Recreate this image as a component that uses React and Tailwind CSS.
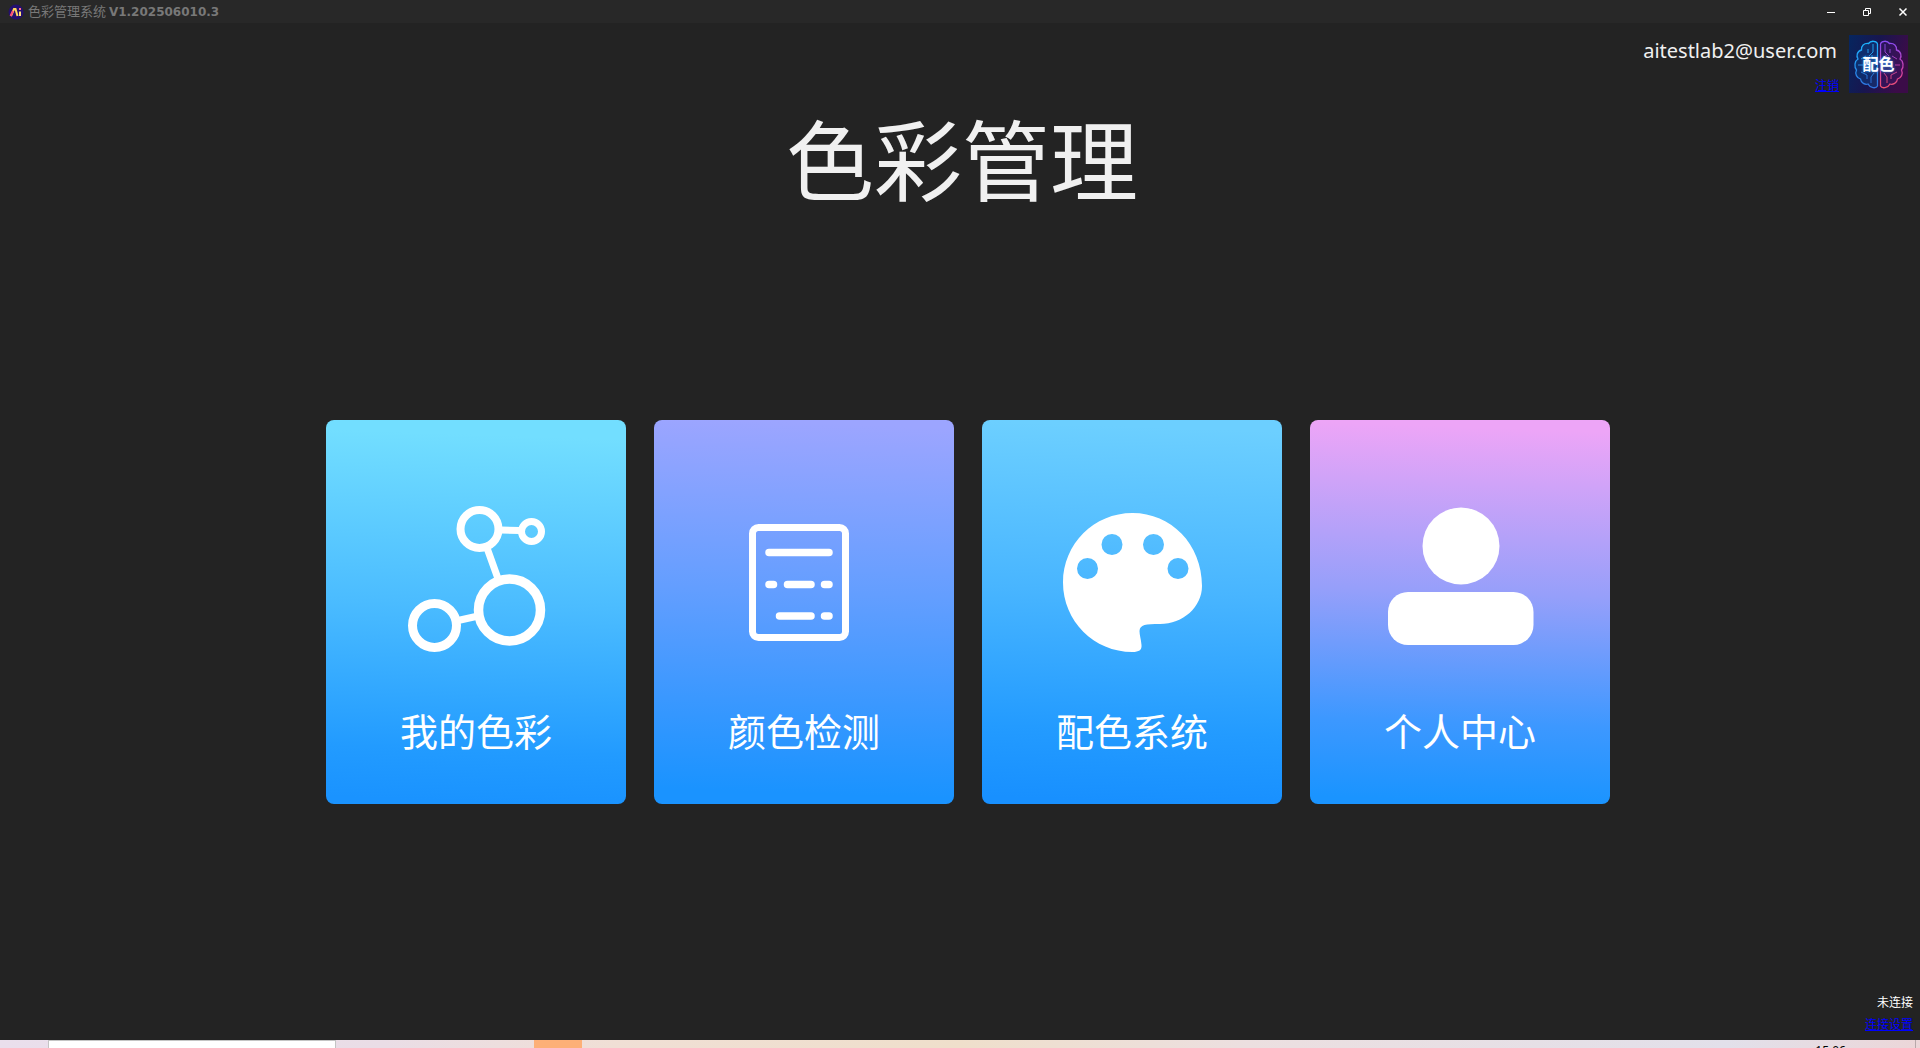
const Molecule = () => (
  <svg viewBox="0 0 300 384" className="h-full w-full" fill="none" stroke="white" aria-hidden="true">
    <circle cx="153.500" cy="109" r="19" strokeWidth="8" />
    <circle cx="205.500" cy="111.500" r="10" strokeWidth="7" />
    <circle cx="183.500" cy="190" r="31" strokeWidth="9.500" />
    <circle cx="108.500" cy="205.500" r="22" strokeWidth="9" />
    <path d="M175 110l19 .5M161 128l11.500 32M132 200.500l18-4" strokeWidth="7" />
  </svg>
);

const Report = () => (
  <svg viewBox="0 0 300 384" className="h-full w-full" fill="none" stroke="white" aria-hidden="true">
    <rect x="98.500" y="107.500" width="93" height="110" rx="6" strokeWidth="7" />
    <path
      d="M115 132.500h60M115 164.500h4.500M133.500 164.500h23.500M170.500 164.500h4.500M125.500 196h31.500M170.500 196h4.500"
      strokeWidth="7.500"
      strokeLinecap="round"
    />
  </svg>
);

const Palette = () => (
  <svg viewBox="0 0 300 384" className="h-full w-full" fill="white" aria-hidden="true">
    <path
      fillRule="evenodd"
      d="M150.500 93C112 93 81 124 81 162.500S112 232 150.500 232c6.500 0 9.500-2 9-7c-.5-6-2-10-2-14c.5-6.500 6-7 20.500-7c23 0 42-17 42-38C220 124 189 93 150.500 93zM105.500 138a10.500 10.500 0 1 1 0 21a10.500 10.500 0 0 1 0-21zM130 114a10.500 10.500 0 1 1 0 21a10.500 10.500 0 0 1 0-21zM171.500 114a10.500 10.500 0 1 1 0 21a10.500 10.500 0 0 1 0-21zM196 138a10.500 10.500 0 1 1 0 21a10.500 10.500 0 0 1 0-21z"
    />
  </svg>
);

const Person = () => (
  <svg viewBox="0 0 300 384" className="h-full w-full" fill="white" aria-hidden="true">
    <circle cx="151" cy="126" r="38.500" />
    <rect x="78" y="172" width="145.500" height="53" rx="20" />
  </svg>
);

const cards = [
  { label: '我的色彩', icon: Molecule, bg: 'bg-[linear-gradient(2deg,#1a93ff_2%,#229bff_15%,#4bbcff_52%,#72deff_95%)]' },
  { label: '颜色检测', icon: Report, bg: 'bg-[linear-gradient(2deg,#1a93ff_4%,#2d96ff_18%,#639eff_55%,#9ca5ff_98%)]' },
  { label: '配色系统', icon: Palette, bg: 'bg-[linear-gradient(2deg,#1890ff_2%,#239bff_20%,#48b5ff_55%,#6ccfff_97%)]' },
  { label: '个人中心', icon: Person, bg: 'bg-[linear-gradient(2deg,#1a94ff_2%,#3d98ff_22%,#969ffa_55%,#eda5f7_97%)]' },
];

const AppLogo = () => (
  <svg viewBox="0 0 16 16" className="h-4 w-4" aria-hidden="true">
    <circle cx="8" cy="8" r="7.500" fill="#24106f" />
    <path d="M3 12L6 5h1.500l2 7" fill="none" stroke="#ffd95c" strokeWidth="2" />
    <path d="M2.500 12L5 7" stroke="#ff4a78" strokeWidth="2" />
    <path d="M12 7.500V12" stroke="#ffe47a" strokeWidth="2" />
    <path d="M12 4v2" stroke="#ff6a8c" strokeWidth="2" />
  </svg>
);

// Half of the brain outline, mirrored for the right side
const halfBrain =
  'M28.500 9C28 6 22 5 19.500 8.500C15 8 12 11 12.500 15C8 16 7 21 9 24C5.500 26 5 32 7.500 35C5.500 39 8 43 11.500 44C12 48 16 50 19 49C21 53 27 54 28.500 51z';
const halfTraces =
  'M24 9v8l-4 4M19 14v4M12 24l5-3M9 30h5M23 23v-3M12 37l6 3v4M22 48v-6l3-4M17 36h4';

const Brain = () => (
  <svg viewBox="0 0 59 58" className="h-full w-full" fill="none" aria-hidden="true">
    <defs>
      <linearGradient id="avatarBg" x1="0" y1="0" x2="1" y2="0.3">
        <stop offset="0" stopColor="#06265f" />
        <stop offset="0.5" stopColor="#18164f" />
        <stop offset="1" stopColor="#3b0c48" />
      </linearGradient>
      <linearGradient id="leftSide" x1="0" y1="0" x2="0" y2="1">
        <stop offset="0" stopColor="#1cb4ff" />
        <stop offset="1" stopColor="#2f74e0" />
      </linearGradient>
      <linearGradient id="rightSide" x1="0" y1="0" x2="0" y2="1">
        <stop offset="0" stopColor="#8a4cf5" />
        <stop offset="0.6" stopColor="#c840a8" />
        <stop offset="1" stopColor="#f05070" />
      </linearGradient>
    </defs>
    <rect width="59" height="58" fill="url(#avatarBg)" />
    <g stroke="url(#leftSide)" strokeWidth="1.3">
      <path d={halfBrain} fill="#0b4a94" fillOpacity="0.4" />
      <path d={halfTraces} strokeWidth="0.9" />
    </g>
    <g stroke="url(#rightSide)" strokeWidth="1.3" transform="translate(60 0) scale(-1 1)">
      <path d={halfBrain} fill="#4a1a78" fillOpacity="0.3" />
      <path d={halfTraces} strokeWidth="0.9" />
    </g>
  </svg>
);

function TitleBar() {
  return (
    <header className="flex h-[23px] items-center justify-between bg-[#282828] pl-2 text-[#787878]">
      <div className="flex items-center gap-1">
        <AppLogo />
        <span className="text-[13px] leading-4">
          色彩管理系统 <span className="font-[DejaVu_Sans] text-[12px] font-bold">V1.202506010.3</span>
        </span>
      </div>
      <div className="flex text-white">
        <button aria-label="最小化" className="flex h-[23px] w-9 items-center justify-center">
          <svg viewBox="0 0 10 10" className="h-[10px] w-[10px]" stroke="currentColor">
            <path d="M2 5.500h8" />
          </svg>
        </button>
        <button aria-label="还原" className="flex h-[23px] w-9 items-center justify-center">
          <svg viewBox="0 0 10 10" className="h-[10px] w-[10px]" fill="none" stroke="currentColor">
            <path d="M2.500 3.500h5v5h-5zM4.500 3.500v-2h5v5h-2" />
          </svg>
        </button>
        <button aria-label="关闭" className="flex h-[23px] w-9 items-center justify-center">
          <svg viewBox="0 0 10 10" className="h-[10px] w-[10px]" stroke="currentColor" strokeWidth="1.500">
            <path d="M2.500 1.500l7 7M9.500 1.500l-7 7" />
          </svg>
        </button>
      </div>
    </header>
  );
}

function UserPanel() {
  return (
    <div className="flex justify-end pt-3 pr-3">
      <div className="flex flex-col items-end">
        <span className="pt-1 pr-3 font-[Noto_Sans] text-[20px] leading-6 text-[#f0f0f0]">aitestlab2@user.com</span>
        <a href="#logout" className="mt-[14px] pr-[10px] text-[12px] leading-4 text-[#0000ff] underline">
          注销
        </a>
      </div>
      <div className="relative h-[58px] w-[59px]">
        <Brain />
        <span className="absolute inset-0 text-center text-[16px] leading-[56px] font-bold text-white text-shadow-[0_0_3px_#3aa0ff]">
          配色
        </span>
      </div>
    </div>
  );
}

function MenuCard({ label, icon: Icon, bg }) {
  return (
    <button className={`relative h-[384px] w-[300px] overflow-hidden rounded-lg ${bg}`}>
      <span className="absolute inset-0">
        <Icon />
      </span>
      <span className="relative flex h-full items-end justify-center pb-[46px] text-[38px] leading-[56px] text-white">
        {label}
      </span>
    </button>
  );
}

function Taskbar() {
  return (
    <footer className="flex h-2 justify-between overflow-hidden bg-[linear-gradient(90deg,#eadfec_0%,#eadde6_20%,#f0dfd5_32%,#efdfcb_50%,#ecdfe0_65%,#e2e0ea_90%,#ecd6d8_100%)]">
      <div className="flex pl-12">
        <div className="w-[288px] border border-b-0 border-[#c4c4c4] bg-white" />
        <div className="ml-[198px] w-12 bg-[#fdb077]" />
      </div>
      <div className="flex gap-[69px] pr-1">
        <span className="pt-[3px] font-[Noto_Sans] text-[12px] leading-4 text-black">15:06</span>
        <span className="w-px bg-[#b8a8aa]" />
      </div>
    </footer>
  );
}

function App() {
  return (
    <div className="flex min-h-screen flex-col bg-[#232323] font-['Noto_Sans_CJK_SC',sans-serif]">
      <TitleBar />
      <UserPanel />
      <main className="flex flex-1 flex-col items-center">
        <h1 className="pl-1 text-[88px] leading-[126px] text-[#f0f0f0]">色彩管理</h1>
        <div className="mt-[201px] flex gap-7 pl-4">
          {cards.map((card) => (
            <MenuCard key={card.label} {...card} />
          ))}
        </div>
      </main>
      <div className="flex flex-col items-end gap-[6px] pr-[7px] pb-2 text-[12px] leading-4">
        <span className="text-white">未连接</span>
        <a href="#connection" className="text-[#0000ff] underline">
          连接设置
        </a>
      </div>
      <Taskbar />
    </div>
  );
}

export default App;
